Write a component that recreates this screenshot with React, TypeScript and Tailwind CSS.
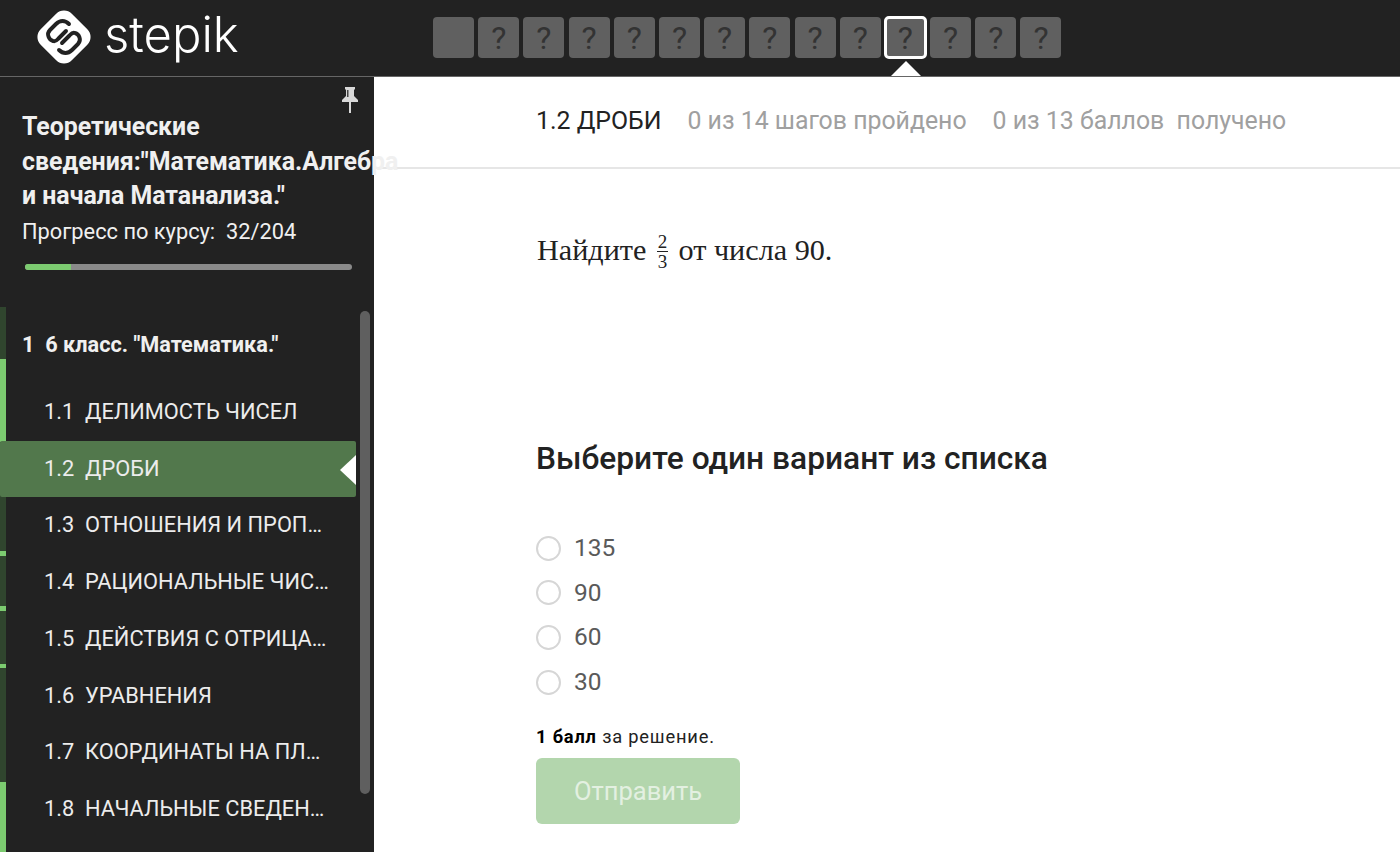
import React from "react";

const lessons = [
  ["1.1", "ДЕЛИМОСТЬ ЧИСЕЛ"],
  ["1.2", "ДРОБИ"],
  ["1.3", "ОТНОШЕНИЯ И ПРОП…"],
  ["1.4", "РАЦИОНАЛЬНЫЕ ЧИС…"],
  ["1.5", "ДЕЙСТВИЯ С ОТРИЦА…"],
  ["1.6", "УРАВНЕНИЯ"],
  ["1.7", "КООРДИНАТЫ НА ПЛ…"],
  ["1.8", "НАЧАЛЬНЫЕ СВЕДЕН…"],
];

const strip: [number, string][] = [
  [52, "bg-[#30452e]"],
  [83, "bg-[#7ccb70]"],
  [57, "bg-[#30452e]"],
  [52, "bg-[#30452e]"],
  [5, "bg-[#7ccb70]"],
  [51, "bg-[#30452e]"],
  [5, "bg-[#7ccb70]"],
  [53, "bg-[#30452e]"],
  [4, "bg-[#7ccb70]"],
  [114, "bg-[#30452e]"],
  [70, "bg-[#7ccb70]"],
];

function Logo() {
  return (
    <svg width="70" height="64" viewBox="0 0 70 64" className="shrink-0">
      <rect x="12" y="10" width="44" height="44" rx="11" transform="rotate(45 34 32)" fill="#fff" />
      <g fill="none" stroke="#222" strokeWidth="3.9" strokeLinecap="round">
        <path d="M39 19 C35 15 30 15 26 19 L20 25 C16 29 19 35 23 36 C26 37 27 35 29 33 L36 26" />
        <path d="M29 45 C33 49 38 49 42 45 L48 39 C52 35 49 29 45 28 C42 27 41 29 39 31 L32 38" />
      </g>
    </svg>
  );
}

function Pin() {
  return (
    <svg width="16" height="26" viewBox="0 0 16 26" className="block">
      <path d="M3 0 H13 V2 L12 3 V9 L16 13 V15 H9 V26 H7 V15 H0 V13 L4 9 V3 L3 2 Z" fill="#d9d9d9" />
      <rect x="5" y="3" width="1.5" height="7" fill="#444" />
    </svg>
  );
}

export default function App() {
  return (
    <div className="w-[1400px] h-[852px] overflow-hidden bg-white flex flex-col font-['Roboto',sans-serif]">
      <header className="h-[77px] shrink-0 bg-[#222222] border-b border-[#666666] flex items-center relative z-20">
        <div className="w-[433px] shrink-0 flex items-center pl-[30px] gap-[4px] pb-[2px]">
          <Logo />
          <span className="font-['Inter',sans-serif] font-light text-[49px] leading-none text-white -mt-[5px]">stepik</span>
        </div>
        <div className="flex gap-[4.2px] -mt-[1px]">
          {Array.from({ length: 14 }).map((_, i) => (
            <div
              key={i}
              className={
                "relative w-[41px] h-[41px] rounded-[4px] bg-[#606060] flex items-center justify-center text-[32px] leading-none text-[#333333] " +
                (i === 10 ? "outline-[3px] outline outline-white -outline-offset-2" : "")
              }
            >
              {i === 0 ? "" : "?"}
              {i === 10 && (
                <div className="absolute left-[6px] top-[44px] w-0 h-0 border-l-[15px] border-r-[15px] border-b-[15px] border-l-transparent border-r-transparent border-b-white" />
              )}
            </div>
          ))}
        </div>
      </header>

      <div className="flex flex-1 min-h-0">
        <aside className="w-[374px] shrink-0 bg-[#222222] relative z-10 flex flex-col">
          <div className="absolute right-[16px] top-[10px]">
            <Pin />
          </div>
          <div className="pl-[22px] pt-[33px] text-[#f0f0f0]">
            <div className="font-bold text-[24.9px] leading-[34.7px] whitespace-nowrap">
              <div>Теоретические</div>
              <div>сведения:"Математика.Алгебра</div>
              <div>и начала Матанализа."</div>
            </div>
            <div className="text-[21.8px] leading-[34px] mt-[1px] whitespace-pre">Прогресс по курсу:  32/204</div>
            <div className="ml-[3px] mt-[15px] w-[327px] h-[6px] rounded-full bg-[#8a8a8a] overflow-hidden">
              <div className="w-[46px] h-full bg-[#7ccb70]" />
            </div>
          </div>

          <div className="flex mt-[37px] flex-1 min-h-0 relative">
            <div className="w-[6px] shrink-0 flex flex-col">
              {strip.map(([h, c], i) => (
                <div key={i} className={c} style={{ height: h }} />
              ))}
            </div>
            <div className="flex-1 min-w-0">
              <div className="pl-[16px] h-[77px] pt-[21px] font-bold text-[21.7px] leading-[34px] text-[#f0f0f0] whitespace-pre">1  6 класс. "Математика."</div>
              <div>
                {lessons.map(([n, t], i) => (
                  <div
                    key={n}
                    className={
                      "relative h-[56.7px] flex items-center pl-[38px] w-[350px] text-[21.8px] text-[#ececec] whitespace-pre " +
                      (i === 1 ? "bg-[#52784c] -ml-[6px] pl-[44px] w-[356px] rounded-[2px]" : "")
                    }
                  >
                    {n}  {t}
                    {i === 1 && (
                      <div className="absolute right-0 top-[14px] w-0 h-0 border-y-[15px] border-r-[16px] border-y-transparent border-r-white" />
                    )}
                  </div>
                ))}
              </div>
            </div>
            <div className="absolute left-[360px] top-[4px] w-[10px] h-[483px] rounded-full bg-[#5f5f5f]" />
          </div>
        </aside>

        <main className="flex-1 min-w-0">
          <div className="h-[92px] border-b-2 border-[#e6e6e6] pl-[162px] pb-[2px] flex items-center text-[24.85px] whitespace-pre">
            <span className="text-[#222222]">1.2 ДРОБИ</span>
            <span className="text-[#a0a0a0] ml-[26px]">0 из 14 шагов пройдено</span>
            <span className="text-[#a0a0a0] ml-[26px]">0 из 13 баллов  получено</span>
          </div>
          <div className="pl-[162px]">
            <div className="flex items-center h-[42px] mt-[61px] ml-[1px] font-['Liberation_Serif',serif] text-[30.2px] text-[#222222]">
              <span>Найдите</span>
              <span className="inline-flex flex-col items-center mx-[11px] text-[19px] leading-[19px] w-[10px]">
                <span className="border-b border-[#222222] px-[1px]">2</span>
                <span>3</span>
              </span>
              <span>от числа 90.</span>
            </div>
            <h2 className="mt-[167px] text-[31.7px] leading-[40px] font-medium text-[#222222]">Выберите один вариант из списка</h2>
            <div className="mt-[47px] flex flex-col">
              {["135", "90", "60", "30"].map((v) => (
                <div key={v} className="h-[44.6px] flex items-center gap-[13px]">
                  <div className="w-[25px] h-[25px] rounded-full border-2 border-[#d6d6d6] bg-white" />
                  <span className="text-[24.5px] text-[#5a5a5a]">{v}</span>
                </div>
              ))}
            </div>
            <div className="mt-[21px] text-[18.3px] leading-[24px] tracking-[0.8px] text-[#222222]">
              <b className="font-bold text-black">1 балл</b> за решение.
            </div>
            <button className="mt-[9px] w-[204px] h-[66px] rounded-[6px] bg-[#b3d6ad] text-[25.5px] text-[#e3f0e1]">Отправить</button>
          </div>
        </main>
      </div>
    </div>
  );
}
